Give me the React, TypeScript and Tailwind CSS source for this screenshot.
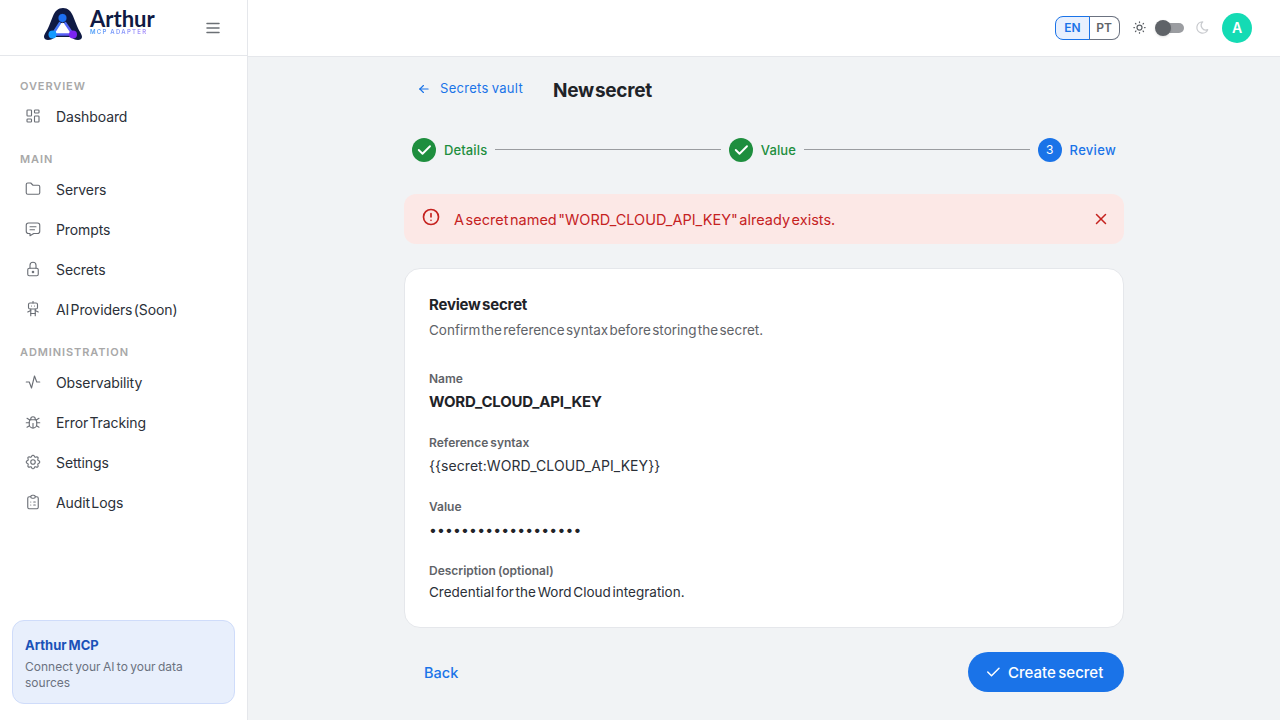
import {
  TbActivity,
  TbAlertCircle,
  TbArrowLeft,
  TbBug,
  TbCheck,
  TbClipboardList,
  TbFolder,
  TbLayoutDashboard,
  TbLock,
  TbMenu2,
  TbMessage,
  TbMoon,
  TbRobot,
  TbSettings,
  TbSun,
  TbX,
} from "react-icons/tb";

const sections = [
  { label: "OVERVIEW", items: [{ icon: TbLayoutDashboard, name: "Dashboard" }] },
  {
    label: "MAIN",
    items: [
      { icon: TbFolder, name: "Servers" },
      { icon: TbMessage, name: "Prompts" },
      { icon: TbLock, name: "Secrets" },
      { icon: TbRobot, name: "AI Providers (Soon)" },
    ],
  },
  {
    label: "ADMINISTRATION",
    items: [
      { icon: TbActivity, name: "Observability" },
      { icon: TbBug, name: "Error Tracking" },
      { icon: TbSettings, name: "Settings" },
      { icon: TbClipboardList, name: "Audit Logs" },
    ],
  },
];

function Logo() {
  return (
    <div className="flex items-center gap-[8px] -mt-[7px]">
      <svg width="38" height="32" viewBox="0 0 38 32" fill="none">
        <defs>
          <linearGradient id="tri" x1="8" y1="10" x2="30" y2="28" gradientUnits="userSpaceOnUse">
            <stop offset="0" stopColor="#2f8cf7" />
            <stop offset="1" stopColor="#6d4cf5" />
          </linearGradient>
        </defs>
        <path
          d="M0 29C0 26 3 23 5 18L9 8C11 3 14 0 19 0C24 0 27 3 29 8L33 18C35 23 38 26 38 29C38 31 36 32 34 32C31 32 29 31 27 29H11C9 31 7 32 4 32C2 32 0 31 0 29Z"
          fill="#0f1a44"
        />
        <path d="M18.5 11L8.5 26.5H29Z" fill="#ffffff" stroke="url(#tri)" strokeWidth="2.4" strokeLinejoin="round" />
        <circle cx="18.5" cy="10" r="4.6" fill="#1d6ff2" stroke="#0f1a44" strokeWidth="1" />
        <circle cx="8.5" cy="26.5" r="4" fill="#159bff" />
        <circle cx="29" cy="26.5" r="4" fill="#7a24f2" />
      </svg>
      <div className="flex flex-col -mt-[3px]">
        <span className="text-[22px] leading-[18px] font-bold text-[#0f1a44] font-['Lato',sans-serif]">Arthur</span>
        <span className="text-[6px] leading-[7px] font-semibold tracking-[1.25px] w-fit bg-gradient-to-r from-[#3f9bf8] to-[#a78bfa] bg-clip-text text-transparent">
          MCP ADAPTER
        </span>
      </div>
    </div>
  );
}

function Sidebar() {
  return (
    <aside className="w-[248px] shrink-0 h-full flex flex-col bg-white border-r border-[#e5e7eb]">
      <div className="h-14 shrink-0 border-b border-[#e5e7eb] flex items-center pl-11 pr-[25px] justify-between">
        <Logo />
        <TbMenu2 className="w-[18px] h-[18px] text-[#6b7075]" />
      </div>
      <nav className="flex-1 flex flex-col gap-[13px] pt-[20px]">
        {sections.map((section) => (
          <div key={section.label}>
            <div className="h-5 pl-5 flex items-center text-[11px] font-semibold tracking-[0.9px] text-[#a8a8a8]">
              {section.label}
            </div>
            {section.items.map((item) => (
              <div key={item.name} className="h-10 pl-6 flex items-center gap-[14px] text-sm text-[#2b3038]">
                <item.icon className="w-[18px] h-[18px] text-[#6b6f76] stroke-[1.5]" />
                <span className="mt-px tracking-[-0.1px] [word-spacing:-2.5px]">{item.name}</span>
              </div>
            ))}
          </div>
        ))}
      </nav>
      <div className="mx-3 mb-4 h-[84px] rounded-xl border border-[#cfdcfa] bg-[#e8effc] px-3 pt-[14px]">
        <div className="text-[13px] leading-5 font-bold text-[#1a52b8] [word-spacing:-1px]">Arthur MCP</div>
        <div className="text-xs leading-4 mt-[4px] text-[#6b7280] [word-spacing:-1px]">
          Connect your AI to your data sources
        </div>
      </div>
    </aside>
  );
}

function Topbar() {
  return (
    <header className="h-[57px] shrink-0 bg-white border-b border-[#e5e7eb] flex items-center justify-end pr-7 pb-[1px]">
      <div className="flex h-6 text-xs font-semibold">
        <div className="w-[35px] flex items-center justify-center rounded-l-lg border border-[#1a73e8] bg-[#e8f0fe] text-[#1a73e8]">
          EN
        </div>
        <div className="w-[31px] -ml-px flex items-center justify-center rounded-r-lg border border-l-0 border-[#6b7280] text-[#5f6368]">
          PT
        </div>
      </div>
      <TbSun className="w-[15px] h-[15px] ml-[12px] text-[#5f6368]" />
      <div className="relative w-[26px] h-[10px] ml-[11px] rounded-full bg-[#9b9da1]">
        <div className="absolute -left-[3px] -top-[3px] w-4 h-4 rounded-full bg-[#5f6368] shadow-sm" />
      </div>
      <TbMoon className="w-[15px] h-[15px] ml-[11px] text-[#c9cbcf]" />
      <div className="w-[30px] h-[30px] ml-[12px] rounded-full bg-[#14dbb4] text-white text-sm font-semibold flex items-center justify-center">
        A
      </div>
    </header>
  );
}

function Step({ done, label, num }: { done?: boolean; label: string; num?: number }) {
  return (
    <div className="flex items-center gap-2">
      <div
        className={
          done
            ? "w-6 h-6 rounded-full bg-[#1e8e3e] flex items-center justify-center text-white"
            : "w-6 h-6 rounded-full bg-[#1a73e8] flex items-center justify-center text-white text-xs"
        }
      >
        {done ? <TbCheck className="w-[18px] h-[18px] stroke-[2.5]" /> : num}
      </div>
      <span
        className={
          done
            ? "mt-px text-[13px] font-medium tracking-[0.12px] text-[#1e8e3e]"
            : "mt-px text-[13px] font-medium tracking-[0.3px] text-[#1a73e8]"
        }
      >
        {label}
      </span>
    </div>
  );
}

function Field({ label, valueClass, children }: { label: string; valueClass: string; children: React.ReactNode }) {
  return (
    <div className="h-[44px]">
      <div className="text-xs leading-5 font-semibold text-[#5f6368] [word-spacing:-1px]">{label}</div>
      <div className={valueClass}>{children}</div>
    </div>
  );
}

export default function App() {
  return (
    <div className="w-[1280px] h-[720px] overflow-hidden flex bg-[#f1f3f5] font-['Inter',sans-serif]">
      <Sidebar />
      <div className="flex-1 flex flex-col">
        <Topbar />
        <main className="w-[720px] mx-auto">
          <div className="h-[65px] flex items-center pl-[13px] pb-[1px]">
            <TbArrowLeft className="w-3.5 h-3.5 text-[#1a73e8]" />
            <span className="ml-[9px] text-[13px] tracking-[0.3px] text-[#1a73e8] [word-spacing:-1px]">Secrets vault</span>
            <span className="ml-[30px] mt-[4px] text-[19px] font-bold tracking-[-0.3px] text-[#1f2328] [word-spacing:-3px]">
              New secret
            </span>
          </div>
          <div className="h-[56px] flex items-center pl-2 pr-2 gap-2">
            <Step done label="Details" />
            <div className="flex-1 h-px -mt-px bg-[#9a9ca0]" />
            <Step done label="Value" />
            <div className="flex-1 h-px -mt-px bg-[#9a9ca0]" />
            <Step num={3} label="Review" />
          </div>
          <div className="mt-4 h-[50px] rounded-xl bg-[#fce8e6] flex items-center pl-[17px] pr-[14px] text-[#c5221f]">
            <TbAlertCircle className="w-5 h-5 -mt-1" />
            <span className="ml-[13px] mt-[1px] text-[14.5px] [word-spacing:-2.5px]">
              A secret named "WORD_CLOUD_API_KEY" already exists.
            </span>
            <TbX className="ml-auto w-[18px] h-[18px]" />
          </div>
          <div className="mt-6 h-[360px] rounded-2xl border border-[#e5e7eb] bg-white px-6 pt-[26px]">
            <div className="text-[15px] leading-5 font-bold tracking-[-0.2px] text-[#1f2328] [word-spacing:-2px]">Review secret</div>
            <div className="mt-[5px] text-[13.5px] leading-5 text-[#5f6368] [word-spacing:-2.5px]">
              Confirm the reference syntax before storing the secret.
            </div>
            <div className="mt-[29px] flex flex-col gap-[20px]">
              <Field label="Name" valueClass="mt-[2px] leading-[21px] text-[15px] font-bold tracking-[-0.2px] text-[#1f2328]">
                WORD_CLOUD_API_KEY
              </Field>
              <Field label="Reference syntax" valueClass="mt-[2px] leading-[21px] text-sm tracking-[0.06px] text-[#2b3038]">
                {"{{secret:WORD_CLOUD_API_KEY}}"}
              </Field>
              <Field label="Value" valueClass="mt-[2px] leading-[21px] text-sm tracking-[0.15px] text-[#1f2328]">
                {"•".repeat(19)}
              </Field>
              <Field label="Description (optional)" valueClass="mt-[1px] leading-[21px] text-[13.5px] text-[#2b3038] [word-spacing:-2px]">
                Credential for the Word Cloud integration.
              </Field>
            </div>
          </div>
          <div className="mt-6 h-10 flex items-center justify-between pl-5">
            <span className="mt-[1px] text-[14.5px] font-medium text-[#1a73e8]">Back</span>
            <div className="h-10 w-[156px] rounded-full bg-[#1a73e8] text-white flex items-center pl-4 gap-[6px]">
              <TbCheck className="w-[18px] h-[18px]" />
              <span className="mt-[2px] text-[15px] font-medium [word-spacing:-1.5px]">Create secret</span>
            </div>
          </div>
        </main>
      </div>
    </div>
  );
}
